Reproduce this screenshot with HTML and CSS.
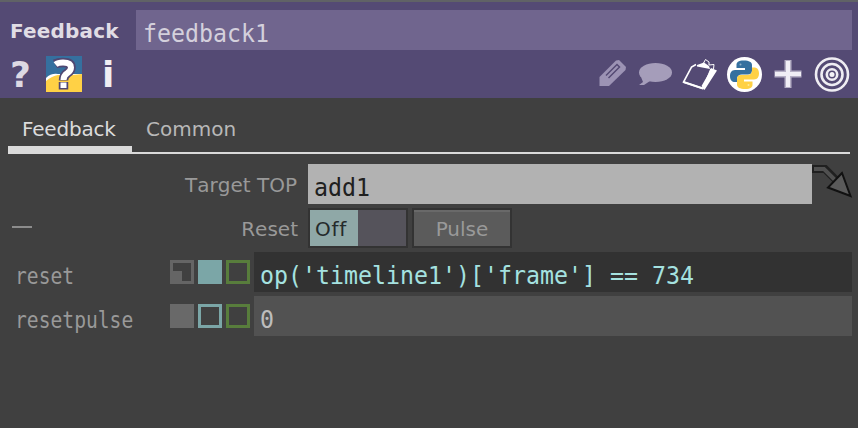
FILE: index.html
```html
<!DOCTYPE html>
<html lang="en">
<head>
<meta charset="utf-8">
<title>Feedback parameters</title>
<link rel="stylesheet" href="styles.css">
</head>
<body>
<main class="panel">
  <header class="head">
    <div class="name-row">
      <span class="op-type">Feedback</span>
      <div class="name-field"><span class="mono">feedback1</span></div>
    </div>
    <div class="tools">
      <div class="tools-left">
        <span class="help">?</span>
        <svg class="pyhelp" width="36" height="36" viewBox="0 0 36 36"><rect width="36" height="36" fill="#35709f"/><path d="M0 22Q5 17 12 18H36V36H0Z" fill="#fff"/><path d="M0 25Q6 20 12 19H26L36 18V36H0Z" fill="#ffd145"/><path d="M9 8Q12 6.500 17 6.500Q25 6.500 25 11.500Q25 14.500 21.500 17Q17.500 19.500 17.500 24.500M17.500 26V33.500" fill="none" stroke="#504772" stroke-width="9.500"/><path d="M9.500 8.500Q12 6.500 17 6.500Q25 6.500 25 11.500Q25 14.500 21.500 17Q17.500 19.500 17.500 24M17.500 26.500V32" fill="none" stroke="#fff" stroke-width="6"/></svg>
        <span class="info">i</span>
      </div>
      <svg class="tools-right" width="258" height="40" viewBox="596 54 258 40">
        <path d="M599.500 86V77L616 60.500L619 60L626 67L625.500 70L609 86Z" fill="#9c93b4"/><path d="M606 75.500L617 64.500L619.500 67L608.500 78" fill="none" stroke="#544a74" stroke-width="1.500"/>
        <ellipse cx="655.500" cy="72.500" rx="16.500" ry="9.500" fill="#a59dba"/><path d="M641 77L643 82L639 85H644L650 81Z" fill="#a59dba"/>
        <path d="M696 64.500L691.500 67L683.500 82L703 88.500L711 69" fill="none" stroke="#fff" stroke-width="1.600"/><path d="M683.500 82L703 88.500" stroke="#fff" stroke-width="2"/><path d="M711 68L717 70.500L704.500 90L701.500 86L709 73Z" fill="#fff"/><path d="M697 65L704 62.500L709 66L710 69L697 66.500Z" fill="#fff"/><path d="M703 64L705.500 59.500L709 62V65L714 64.500L713.500 69" fill="none" stroke="#fff"/>
        <circle cx="744.500" cy="74.500" r="17.500" fill="#fff"/>
        <g fill="#35709f"><path d="M744 60.500C738 60.500 736.500 62.500 736.500 65V68H745V70H735C731.500 70 730 73 730 76C730 80 732 82 735 82H737V79C737 76 739 74.500 742 74.500H748C750.500 74.500 752 73 752 70.500V65C752 62 749 60.500 744 60.500Z"/><circle cx="740.500" cy="64.500" r="1" fill="#8fb0c8"/></g>
        <g fill="#ffd145" transform="rotate(180 744.500 74.700)"><path d="M744 60.500C738 60.500 736.500 62.500 736.500 65V68H745V70H735C731.500 70 730 73 730 76C730 80 732 82 735 82H737V79C737 76 739 74.500 742 74.500H748C750.500 74.500 752 73 752 70.500V65C752 62 749 60.500 744 60.500Z"/><circle cx="740.500" cy="64.500" r="1" fill="#ffe89a"/></g>
        <path d="M788 60V88M774.500 74H801.500" stroke="#b5afc5" stroke-width="7"/><path d="M788 61V87M775 74H801" stroke="#f0eef5" stroke-width="4"/>
        <g fill="none" stroke="#efedf3" stroke-width="2.600"><circle cx="832" cy="74.500" r="16"/><circle cx="832" cy="74.500" r="10.500"/><circle cx="832" cy="74.500" r="5.200"/></g><circle cx="832" cy="74.500" r="2.500" fill="#f4f3f7"/>
      </svg>
    </div>
  </header>
  <nav class="tabs">
    <span class="tab active">Feedback</span>
    <span class="tab">Common</span>
  </nav>
  <section class="params">
    <div class="row target">
      <span class="label">Target TOP</span>
      <div class="field light"><span class="mono">add1</span></div>
      <svg class="arrow" width="46" height="40" viewBox="812 164 46 40"><path d="M812 169H825L836 180" fill="none" stroke="#202020" stroke-width="8"/><path d="M814 169H824L836 181" fill="none" stroke="#505050" stroke-width="4"/><path d="M842 173L828 187.500L850.500 196Z" fill="#5a5a5a" stroke="#111" stroke-width="2"/></svg>
    </div>
    <div class="row reset">
      <span class="collapse"></span>
      <span class="label">Reset</span>
      <div class="toggle"><span class="off">Off</span></div>
      <div class="pulse">Pulse</div>
    </div>
    <div class="row expr">
      <span class="small-mono">reset</span>
      <div class="modes"><i class="mode constant-off"></i><i class="mode teal-on"></i><i class="mode green"></i></div>
      <div class="field dark"><span class="mono">op('timeline1')['frame'] == 734</span></div>
    </div>
    <div class="row expr">
      <span class="small-mono">resetpulse</span>
      <div class="modes"><i class="mode constant-on"></i><i class="mode teal"></i><i class="mode green"></i></div>
      <div class="field gray"><span class="mono">0</span></div>
    </div>
  </section>
</main>
</body>
</html>
```
FILE: styles.css
```css
* { box-sizing: border-box; }
body { margin: 0; background: #404040; overflow: hidden; }
.panel { width: 858px; height: 428px; font-family: "DejaVu Sans", sans-serif; font-size: 20px; }
.head { height: 98px; background: #544a74; border-top: 2px solid #606266; padding-top: 8px; }
.name-row { display: flex; height: 40px; padding-right: 6px; }
.op-type { width: 136px; padding-left: 10px; font: bold 20px/42px "DejaVu Sans", sans-serif; letter-spacing: .2px; color: #e0dde5; }
.name-field { flex: 1; background: #70658e; color: #d4d0dc; padding-left: 7px; }
.mono { display: block; width: max-content; font: 25px/48px "DejaVu Sans Mono", monospace; white-space: pre; transform: scaleX(.93); transform-origin: left; }
.tools { display: flex; justify-content: space-between; padding: 4px 4px 0 10px; }
.tools-left { display: flex; }
.help, .info { width: 36px; font: bold 36px/41px "DejaVu Sans", sans-serif; color: #ddd9e3; }
.pyhelp { margin-top: 2px; }
.info { color: #f0eef3; padding-left: 20px; }
.tabs { display: flex; height: 56px; margin: 0 8px; border-bottom: 2px solid #dadada; }
.tab { height: 56px; padding: 0 14px; line-height: 62px; color: #b8b8b8; }
.active { width: 124px; border-bottom: 8px solid #dadada; color: #dcdcdc; letter-spacing: -.2px; }
.params { display: flex; flex-direction: column; gap: 4px; padding-top: 10px; }
.row { display: flex; height: 40px; color: #999; }
.label { width: 298px; margin-right: 10px; text-align: right; line-height: 42px; font-kerning: none; }
.target .label { padding-right: 1px; }
.field { flex: 1; margin-right: 6px; padding-left: 6px; }
.light { flex: none; width: 504px; margin: 0; background: #b2b2b2; color: #202020; }
.collapse { width: 20px; height: 2px; margin: 18px 0 0 12px; background: #8c8c8c; }
.reset .label { width: 266px; }
.toggle { width: 100px; border: 2px solid #333; background: #55535b; margin-right: 4px; }
.off { display: block; width: 48px; height: 36px; padding-left: 5px; line-height: 38px; color: #252b2b; background: #8fa8a7; letter-spacing: .7px; }
.pulse { width: 100px; border: 2px solid #333; background: #5b5b5b; box-shadow: inset 0 2px #696969; line-height: 38px; text-align: center; color: #999; }
.small-mono { width: 155px; margin-left: 15px; font: 22.500px/49px "DejaVu Sans Mono", monospace; transform: scaleX(.873); transform-origin: left; }
.modes { display: flex; width: 84px; gap: 4px; padding-top: 8px; }
.mode { width: 24px; height: 24px; border: 3px solid; }
.constant-off { border-color: #656565; background: linear-gradient(#656565, #656565) 0 100% / 9px 10px no-repeat; }
.constant-on { border-color: #696969; background: #696969; }
.teal-on { border-color: #7ba6a7; background: #7ba6a7; }
.teal { border-color: #7ba6a7; }
.green { border-color: #587d3c; }
.dark { background: #323232; color: #a5e2e0; }
.gray { background: #525252; color: #bdbdbd; }
```
